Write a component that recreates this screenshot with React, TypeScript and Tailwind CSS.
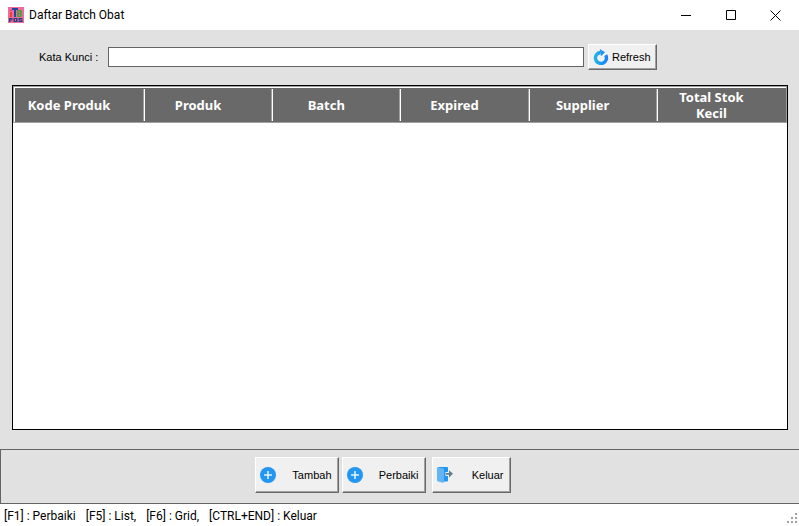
import React from "react";

const columns = ["Kode Produk", "Produk", "Batch", "Expired", "Supplier", "Total Stok Kecil"];

const shortcuts = ["[F1] : Perbaiki", "[F5] : List,", "[F6] : Grid,", "[CTRL+END] : Keluar"];

const raised =
  "flex items-center border border-t-white border-l-white border-r-[#696969] border-b-[#696969] bg-[#f0f0f0] shadow-[inset_-1px_-1px_0_#a0a0a0]";

const AppLogo = () => (
  <svg width="16" height="16" viewBox="0 0 16 16" aria-hidden="true">
    <rect width="16" height="16" fill="#ee6a9f" />
    <path d="M2 3h2v1H2zM2 5h2v5H2z" fill="#e8452c" />
    <path d="M4 1h6v2H8v7H6V3H4z" fill="#2145a0" />
    <path d="M9 3h4l1 1v2l-1 .5 1 .5v2l-1 1H9zM11 4.500V6h1V4.500zM11 7.500V9h1V7.500z" fill="#4f9f3a" fillRule="evenodd" />
    <path
      d="M1 11h3.500v2.500h-2V15H1zM2.500 12v.7h.8V12zM5.500 11h4v4h-4zM7 12v2h1v-2zM10.500 11h4v1H12v.5h2.500V15h-4v-1H13v-.5h-2.500z"
      fill="#27407e"
      fillRule="evenodd"
    />
  </svg>
);

const RefreshIcon = () => (
  <svg width="16" height="16" viewBox="0 0 16 16" fill="none" aria-hidden="true">
    <defs>
      <linearGradient id="refresh" x1="0" y1="0" x2="1" y2="0">
        <stop offset="0" stopColor="#22b0ea" />
        <stop offset="1" stopColor="#1683fb" />
      </linearGradient>
    </defs>
    <path d="M7.500 3.500A5.500 5.500 0 1 0 12.700 6.200" stroke="url(#refresh)" strokeWidth="3.4" />
    <path d="M6.800 0 12 3.300 8 7.200z" fill="#1c93f3" />
  </svg>
);

const PlusIcon = () => (
  <svg width="16" height="16" viewBox="0 0 16 16" aria-hidden="true">
    <circle cx="8" cy="8" r="8" fill="#2196f3" />
    <path d="M8 4v8M4 8h8" stroke="#e3f2fd" strokeWidth="1.6" />
  </svg>
);

const ExitIcon = () => (
  <svg width="16" height="16" viewBox="0 0 16 16" aria-hidden="true">
    <path d="M1 0h9a1 1 0 0 1 1 1v12.500a1 1 0 0 1-1 1H5z" fill="#2196f3" />
    <path d="M0 .8Q0 0 1 .2l5 1.300q1 .3 1 1.200v12q0 1.300-1 1L1 14.500Q0 14.200 0 13z" fill="#64b5f6" />
    <path d="M8.500 5H11v4H8.500z" fill="#f0f0f0" />
    <path d="M9 6h3V3.200l4 3.600-4 3.600V7.800H9z" fill="#607d8b" />
  </svg>
);

const TitleBar = () => (
  <header className="flex h-[30px] items-center bg-white pr-px pl-2">
    <AppLogo />
    <h1 className="ml-[5px] grow font-[Roboto,sans-serif] text-[12px]">Daftar Batch Obat</h1>
    <button type="button" aria-label="Minimize" className="flex h-7 w-[45px] items-center justify-center">
      <svg width="11" height="11" viewBox="0 0 11 11" stroke="black" aria-hidden="true">
        <path d="M1 5.500h10" />
      </svg>
    </button>
    <button type="button" aria-label="Maximize" className="flex h-7 w-[45px] items-center justify-center">
      <svg width="11" height="11" viewBox="0 0 11 11" fill="none" stroke="black" aria-hidden="true">
        <path d="M1.500.5h9v9h-9z" />
      </svg>
    </button>
    <button type="button" aria-label="Close" className="flex h-7 w-[45px] items-center justify-center">
      <svg width="11" height="11" viewBox="0 0 11 11" stroke="black" aria-hidden="true">
        <path d="M.5.5l10 10M10.500.5l-10 10" />
      </svg>
    </button>
  </header>
);

const BatchTable = () => (
  <div className="grow border border-black bg-white">
    <table className="w-full table-fixed border-separate border-spacing-0 border border-[#a0a0a0] bg-[#696969] font-['Noto_Sans',sans-serif] text-[13px] leading-4 font-bold text-white">
      <thead>
        <tr>
          {columns.map((title) => (
            <th key={title} scope="col" className="group border-t border-white p-0 py-px first:w-[131px] first:border-l">
              <div className="flex h-8 items-center justify-center border-r border-white pr-[21px] shadow-[inset_-1px_0_0_#a0a0a0] group-last:border-r-0 group-last:px-4 group-last:pr-[37px] group-last:shadow-none">
                {title}
              </div>
            </th>
          ))}
        </tr>
      </thead>
    </table>
  </div>
);

const SizeGrip = () => (
  <svg width="10" height="10" viewBox="0 0 10 10" fill="#a0a0a0" aria-hidden="true">
    <path d="M8 0h2v2H8zM4 4h2v2H4zM8 4h2v2H8zM0 8h2v2H0zM4 8h2v2H4zM8 8h2v2H8z" />
  </svg>
);

export default function App() {
  return (
    <div className="flex min-h-screen flex-col bg-[#e1e1e1] font-['Liberation_Sans',Arial,sans-serif] text-[11px] text-black">
      <TitleBar />
      <main className="flex grow flex-col">
        <form className="mt-3.5 flex items-center pl-[39px]">
          <label htmlFor="keyword" className="w-[69px]">
            Kata Kunci :
          </label>
          <input
            id="keyword"
            type="text"
            className="mr-1 h-5 w-[476px] border border-[#646464] bg-white px-1 outline-none"
          />
          <button type="button" className={`${raised} h-[26px] w-[69px] gap-[3px] pl-1`}>
            <RefreshIcon />
            Refresh
          </button>
        </form>
        <section className="flex grow flex-col pt-[15px] pr-[11px] pb-[19px] pl-3">
          <BatchTable />
        </section>
        <section className="flex h-[55px] items-start justify-center border border-r-0 border-[#646464] pt-[7px] pr-[35px]">
          <button type="button" className={`${raised} mr-[3px] h-9 w-[84px] justify-between pr-1.5 pl-1`}>
            <PlusIcon />
            Tambah
          </button>
          <button type="button" className={`${raised} mr-1.5 h-9 w-[84px] justify-between pr-1.5 pl-1`}>
            <PlusIcon />
            Perbaiki
          </button>
          <button type="button" className={`${raised} h-9 w-[79px] justify-between pr-1.5 pl-1`}>
            <ExitIcon />
            Keluar
          </button>
        </section>
      </main>
      <footer className="flex h-[22px] items-center bg-white pl-1 font-[Roboto,sans-serif] text-[12px]">
        <ul className="flex grow gap-2.5 pt-0.5">
          {shortcuts.map((item) => (
            <li key={item}>{item}</li>
          ))}
        </ul>
        <span className="self-end pr-0.5 pb-[3px]">
          <SizeGrip />
        </span>
      </footer>
    </div>
  );
}
